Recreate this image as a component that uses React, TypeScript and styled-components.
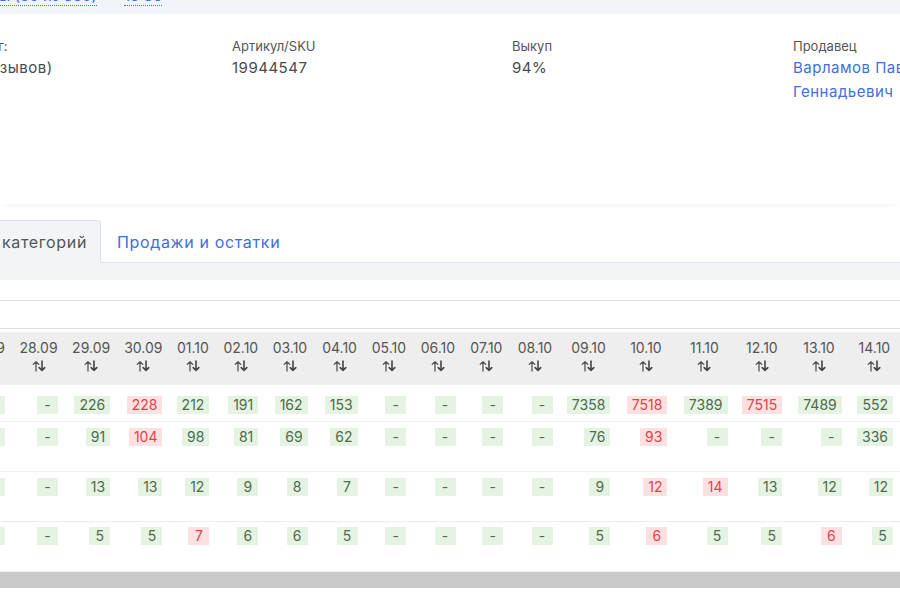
import React from "react";
import styled, { createGlobalStyle } from "styled-components";

const GlobalStyle = createGlobalStyle`
  html, body { margin: 0; padding: 0; background: #ffffff; overflow: hidden; }
  body { font-family: Inter, "Noto Sans", "Liberation Sans", sans-serif; color: #444; }
  #root { width: 900px; height: 600px; overflow: hidden; }
  * { box-sizing: border-box; }
`;

const BLUE = "#3e6fdb";

const Page = styled.div`
  width: 900px;
  height: 600px;
  overflow: hidden;
  background: #fff;
`;

const TopStrip = styled.div`
  height: 14px;
  background: #f1f4f8;
  display: flex;
  align-items: flex-end;
  gap: 27px;
  overflow: hidden;
`;

const StripLink = styled.a<{ $lead?: boolean }>`
  display: block;
  flex: none;
  font-size: 15px;
  line-height: 18px;
  color: ${BLUE};
  text-decoration: none;
  border-bottom: 1px dotted ${BLUE};
  margin-bottom: 8px;
  white-space: nowrap;
  ${(p) => (p.$lead ? "margin-left: -63px; width: 160px; text-align: right;" : "")}
`;

const InfoCard = styled.section`
  position: relative;
  z-index: 1;
  height: 190px;
  padding-top: 22px;
  background: #fff;
  box-shadow: 0 4px 6px -3px rgba(0, 0, 0, 0.04);
`;

const InfoGrid = styled.div`
  display: grid;
  grid-template-columns: 279px 280px 281px 205px;
  margin-left: -47px;
`;

const InfoItem = styled.div`
  display: flex;
  flex-direction: column;
`;

const InfoLabel = styled.div`
  font-size: 13px;
  line-height: 20px;
  color: #555;
`;

const InfoValue = styled.div<{ $link?: boolean }>`
  font-size: 15px;
  line-height: 24px;
  letter-spacing: 0.5px;
  color: ${(p) => (p.$link ? BLUE : "#4a4a4a")};
`;

const TabsBar = styled.nav`
  display: flex;
  margin-top: 16px;
  margin-left: -99px;
  border-bottom: 1px solid #dee2e6;
  height: 43px;
`;

const Tab = styled.button<{ $active?: boolean }>`
  height: 43px;
  margin-bottom: -1px;
  font-family: inherit;
  font-size: 16px;
  letter-spacing: 0.65px;
  border: 1px solid ${(p) => (p.$active ? "#dee2e6" : "transparent")};
  border-bottom-color: ${(p) => (p.$active ? "#f2f4f7" : "transparent")};
  border-top-right-radius: 4px;
  border-top-left-radius: 4px;
  background: ${(p) => (p.$active ? "#f2f4f7" : "transparent")};
  color: ${(p) => (p.$active ? "#555" : BLUE)};
  padding: 0 ${(p) => (p.$active ? "13px" : "15px")};
  width: ${(p) => (p.$active ? "200px" : "auto")};
  text-align: ${(p) => (p.$active ? "right" : "left")};
  white-space: nowrap;
  overflow: hidden;
  cursor: pointer;
`;

const Panel = styled.div`
  background: #f2f4f7;
  padding-top: 17px;
`;

const TableCard = styled.div`
  background: #fff;
  padding-top: 20px;
`;

const Toolbar = styled.div`
  height: 29px;
  border-top: 1px solid #dcdcdc;
  border-bottom: 1px solid #dcdcdc;
`;

const TableScroll = styled.div`
  overflow: hidden;
  margin-top: 3px;
`;

const Table = styled.table`
  border-collapse: collapse;
  table-layout: fixed;
  margin-left: -38px;
`;

const Col = styled.col<{ $w: number }>`
  width: ${(p) => p.$w}px;
`;

const HeadRow = styled.tr`
  background: #eeeeee;
`;

const Th = styled.th`
  padding: 7px 7px 13px;
  font-weight: 400;
  font-size: 14px;
  line-height: 18px;
  color: #555;
  text-align: center;
  white-space: nowrap;
`;

const DateText = styled.div`
  height: 18px;
`;

const SortIcon = styled.svg`
  display: block;
  margin: 3px auto 0;
`;

const BodyRow = styled.tr`
  border-bottom: 1px solid #eeeeee;
`;

const Td = styled.td<{ $top: number; $bottom: number }>`
  padding: ${(p) => p.$top}px 7px ${(p) => p.$bottom}px;
  font-size: 14px;
  line-height: 18px;
  text-align: right;
  vertical-align: top;
  white-space: nowrap;
`;

const Badge = styled.span<{ $tone: "g" | "r" }>`
  display: inline-block;
  vertical-align: top;
  min-width: 21px;
  height: 18px;
  padding: 0 5px;
  font-size: 14px;
  line-height: 18px;
  text-align: center;
  background: ${(p) => (p.$tone === "r" ? "#fde1e1" : "#e4f3e2")};
  color: ${(p) => (p.$tone === "r" ? "#e5404a" : "#4f6b4f")};
`;

const ScrollTrack = styled.div`
  height: 16px;
  background: #cacaca;
`;

const columns: { d: string; w: number }[] = [
  { d: "27.09", w: 50 },
  { d: "28.09", w: 54 },
  { d: "29.09", w: 52 },
  { d: "30.09", w: 52 },
  { d: "01.10", w: 47 },
  { d: "02.10", w: 49 },
  { d: "03.10", w: 50 },
  { d: "04.10", w: 51 },
  { d: "05.10", w: 49 },
  { d: "06.10", w: 50 },
  { d: "07.10", w: 49 },
  { d: "08.10", w: 50 },
  { d: "09.10", w: 58 },
  { d: "10.10", w: 59 },
  { d: "11.10", w: 62 },
  { d: "12.10", w: 55 },
  { d: "13.10", w: 61 },
  { d: "14.10", w: 52 },
];

const rows: { top: number; bottom: number; cells: string[] }[] = [
  {
    top: 11,
    bottom: 7,
    cells: ["174", "-", "226", "228r", "212", "191", "162", "153", "-", "-", "-", "-", "7358", "7518r", "7389", "7515r", "7489", "552"],
  },
  {
    top: 6,
    bottom: 25,
    cells: ["83", "-", "91", "104r", "98", "81", "69", "62", "-", "-", "-", "-", "76", "93r", "-", "-", "-", "336"],
  },
  {
    top: 6,
    bottom: 25,
    cells: ["11", "-", "13", "13", "12", "9", "8", "7", "-", "-", "-", "-", "9", "12r", "14r", "13", "12", "12"],
  },
  {
    top: 5,
    bottom: 26,
    cells: ["5", "-", "5", "5", "7r", "6", "6", "5", "-", "-", "-", "-", "5", "6r", "5", "5", "6r", "5"],
  },
];

const SortArrows = () => (
  <SortIcon width="16" height="12" viewBox="0 0 16 12" fill="none">
    <path d="M5 11V1.6M2.2 4.4L5 1.6l2.8 2.8" stroke="#555" strokeWidth="1.3" strokeLinecap="round" strokeLinejoin="round" />
    <path d="M11 1v9.4M8.2 7.6l2.8 2.8 2.8-2.8" stroke="#444" strokeWidth="1.6" strokeLinecap="round" strokeLinejoin="round" />
  </SortIcon>
);

export default function App() {
  return (
    <Page>
      <GlobalStyle />
      <TopStrip>
        <StripLink $lead>Отзывы (80 из 360)</StripLink>
        <StripLink>18:36</StripLink>
      </TopStrip>

      <InfoCard>
        <InfoGrid>
          <InfoItem>
            <InfoLabel>Рейтинг:</InfoLabel>
            <InfoValue>(32 отзывов)</InfoValue>
          </InfoItem>
          <InfoItem>
            <InfoLabel>Артикул/SKU</InfoLabel>
            <InfoValue>19944547</InfoValue>
          </InfoItem>
          <InfoItem>
            <InfoLabel>Выкуп</InfoLabel>
            <InfoValue>94%</InfoValue>
          </InfoItem>
          <InfoItem>
            <InfoLabel>Продавец</InfoLabel>
            <InfoValue $link>Варламов Павел Геннадьевич</InfoValue>
          </InfoItem>
        </InfoGrid>
      </InfoCard>

      <TabsBar>
        <Tab $active>Позиции категорий</Tab>
        <Tab>Продажи и остатки</Tab>
      </TabsBar>

      <Panel>
        <TableCard>
          <Toolbar />
          <TableScroll>
            <Table>
              <colgroup>
                {columns.map((c) => (
                  <Col key={c.d} $w={c.w} />
                ))}
              </colgroup>
              <thead>
                <HeadRow>
                  {columns.map((c) => (
                    <Th key={c.d}>
                      <DateText>{c.d}</DateText>
                      <SortArrows />
                    </Th>
                  ))}
                </HeadRow>
              </thead>
              <tbody>
                {rows.map((r, i) => (
                  <BodyRow key={i}>
                    {r.cells.map((v, j) => {
                      const red = v.endsWith("r");
                      return (
                        <Td key={j} $top={r.top} $bottom={r.bottom}>
                          <Badge $tone={red ? "r" : "g"}>{red ? v.slice(0, -1) : v}</Badge>
                        </Td>
                      );
                    })}
                  </BodyRow>
                ))}
              </tbody>
            </Table>
          </TableScroll>
          <ScrollTrack />
        </TableCard>
      </Panel>
    </Page>
  );
}
